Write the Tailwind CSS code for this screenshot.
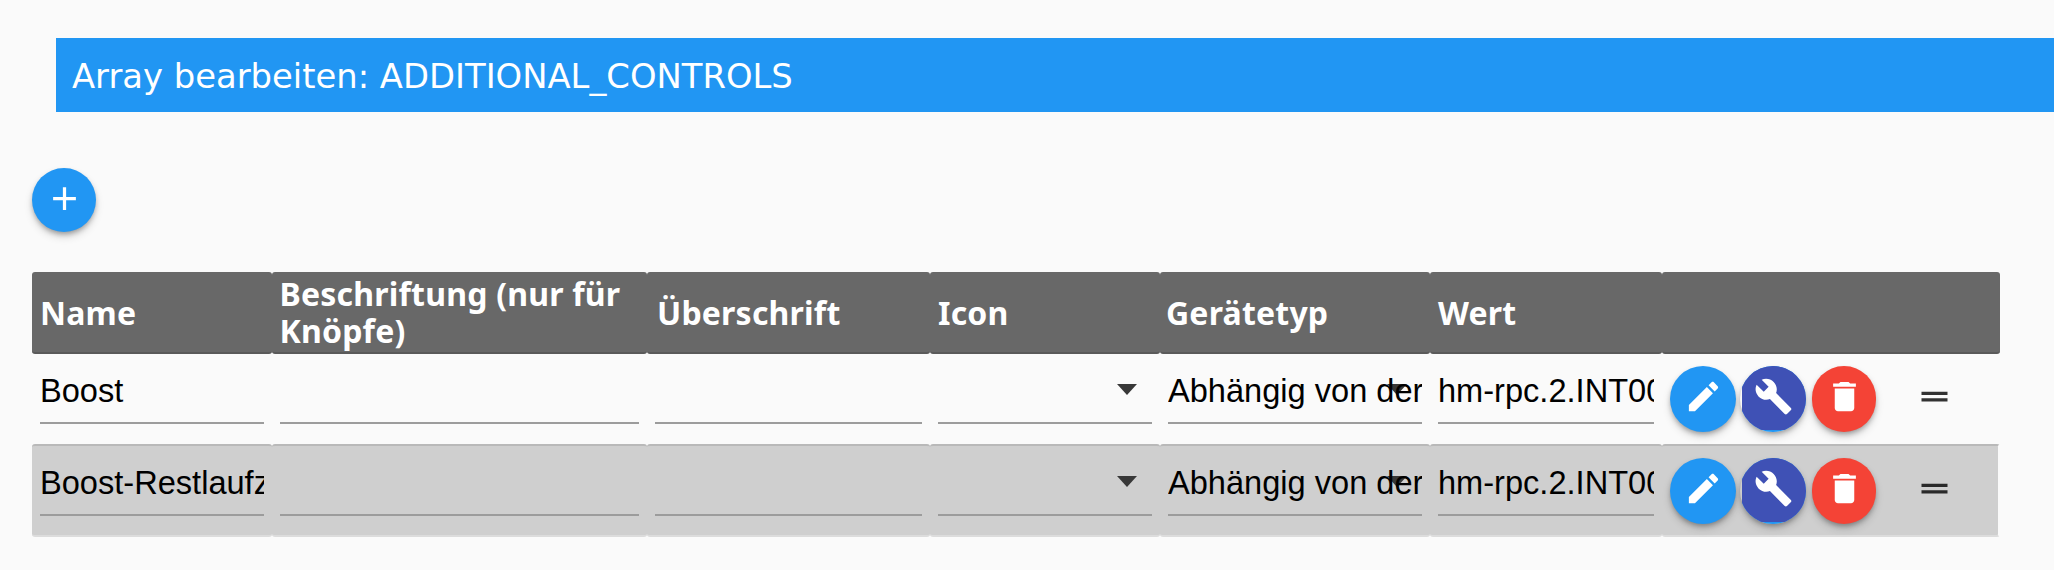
<!DOCTYPE html>
<html lang="de">
<head>
  <meta charset="UTF-8" />
  <title>Array bearbeiten</title>
  <script src="https://cdn.jsdelivr.net/npm/@tailwindcss/browser@4"></script>
</head>
<body class="bg-[#fafafa] w-[2054px] h-[570px] overflow-hidden font-['Liberation_Sans',sans-serif] text-black">

  <!-- Title bar -->
  <div class="mt-[38px] ml-[56px] h-[74px] bg-[#2196f3] text-white pl-[16px] pt-[4px] flex items-center font-['DejaVu_Sans',sans-serif] text-[33.8px]">
    Array bearbeiten: ADDITIONAL_CONTROLS
  </div>

  <!-- Add button -->
  <div class="mt-[56px] ml-[32px] w-[64px] h-[64px] rounded-full bg-[#2196f3] flex items-center justify-center shadow-[0_3px_5px_-1px_rgba(0,0,0,.3),0_5px_8px_0_rgba(0,0,0,.14)]">
    <svg class="w-[39px] h-[39px] -mt-[3px] fill-white" viewBox="0 0 24 24"><path d="M19 13h-6v6h-2v-6H5v-2h6V5h2v6h6v2z"/></svg>
  </div>

  <!-- Table -->
  <table class="mt-[40px] ml-[32px] w-[1968px] table-fixed border-separate border-spacing-0">
    <colgroup>
      <col class="w-[239.5px]" /><col class="w-[375.5px]" /><col class="w-[283px]" /><col class="w-[230px]" /><col class="w-[270px]" /><col class="w-[231.5px]" /><col class="w-[338.5px]" />
    </colgroup>
    <thead>
      <tr class="h-[82px] text-white text-left font-['Noto_Sans',sans-serif] text-[32px] tracking-[0.2px] font-bold leading-[37px]">
        <th class="bg-[#686868] border-b-2 border-[#5a5a5a] rounded-[3px] px-[8px]">Name</th>
        <th class="bg-[#686868] border-b-2 border-[#5a5a5a] rounded-[3px] pl-[8px] pr-0">Beschriftung (nur für Knöpfe)</th>
        <th class="bg-[#686868] border-b-2 border-[#5a5a5a] rounded-[3px] px-[10px]">Überschrift</th>
        <th class="bg-[#686868] border-b-2 border-[#5a5a5a] rounded-[3px] px-[8px]">Icon</th>
        <th class="bg-[#686868] border-b-2 border-[#5a5a5a] rounded-[3px] px-[6px]">Gerätetyp</th>
        <th class="bg-[#686868] border-b-2 border-[#5a5a5a] rounded-[3px] px-[8px]">Wert</th>
        <th class="bg-[#686868] border-b-2 border-[#5a5a5a] rounded-[3px] px-[8px]"></th>
      </tr>
    </thead>
    <tbody>
      <tr class="h-[90px] align-top text-[32.6px] leading-[49px]">
        <td class="pt-[12px] px-[8px]"><div class="h-[58px] border-b-2 border-[#9c9c9c] overflow-hidden whitespace-nowrap">Boost</div></td>
        <td class="pt-[12px] px-[8px]"><div class="h-[58px] border-b-2 border-[#9c9c9c]"></div></td>
        <td class="pt-[12px] px-[8px]"><div class="h-[58px] border-b-2 border-[#9c9c9c]"></div></td>
        <td class="pt-[12px] px-[8px]">
          <div class="relative h-[58px] border-b-2 border-[#9c9c9c]">
            <svg class="absolute right-[15px] top-[18px] w-[20px] h-[11px] fill-[#383838]" viewBox="0 0 20 11"><path d="M0 0h20L10 11z"/></svg>
          </div>
        </td>
        <td class="pt-[12px] px-[8px]">
          <div class="relative h-[58px] border-b-2 border-[#9c9c9c]">
            <svg class="absolute right-[15px] top-[18px] w-[20px] h-[11px] fill-[#383838]" viewBox="0 0 20 11"><path d="M0 0h20L10 11z"/></svg>
            <div class="relative overflow-hidden whitespace-nowrap">Abhängig von der Geräteart</div>
          </div>
        </td>
        <td class="pt-[12px] px-[8px]"><div class="h-[58px] border-b-2 border-[#9c9c9c] overflow-hidden whitespace-nowrap">hm-rpc.2.INT0001234</div></td>
        <td class="pt-[12px] pl-[8.5px]">
          <div class="flex">
            <div class="w-[66px] h-[66px] rounded-full bg-[#2196f3] flex items-center justify-center shadow-[0_3px_5px_-1px_rgba(0,0,0,.3),0_5px_8px_0_rgba(0,0,0,.14)]">
              <svg class="w-[39px] h-[39px] -mt-[5px] fill-white" viewBox="0 0 24 24"><path d="M3 17.25V21h3.75L17.81 9.94l-3.75-3.75L3 17.25zM20.71 7.04c.39-.39.39-1.02 0-1.41l-2.34-2.34c-.39-.39-1.02-.39-1.41 0l-1.83 1.83 3.75 3.75 1.83-1.83z"/></svg>
            </div>
            <div class="relative ml-[6px] w-[64px] h-[66px]">
              <div class="absolute -left-[2px] top-0 w-[66px] h-[66px] rounded-full shadow-[0_3px_5px_-1px_rgba(0,0,0,.3),0_5px_8px_0_rgba(0,0,0,.14)]"></div>
              <div class="relative w-[64px] h-[66px] overflow-hidden">
                <div class="relative -ml-[2px] w-[66px] h-[66px] rounded-full overflow-hidden bg-[#2196f3]">
                  <div class="h-[64px] bg-[#3f51b5] flex items-center justify-center">
                    <svg class="w-[39px] h-[39px] -mt-[3px] fill-white" viewBox="0 0 24 24"><path d="M22.7 19l-9.1-9.1c.9-2.3.4-5-1.5-6.9-2-2-5-2.4-7.4-1.3L9 6 6 9 1.6 4.7C.4 7.1.9 10.1 2.9 12.1c1.9 1.9 4.6 2.4 6.9 1.5l9.1 9.1c.4.4 1 .4 1.4 0l2.3-2.3c.5-.4.5-1.1.1-1.4z"/></svg>
                  </div>
                </div>
              </div>
            </div>
            <div class="ml-[6px] w-[64px] h-[66px] rounded-full bg-[#f44336] flex items-center justify-center shadow-[0_3px_5px_-1px_rgba(0,0,0,.3),0_5px_8px_0_rgba(0,0,0,.14)]">
              <svg class="w-[39px] h-[39px] -mt-[5px] fill-white" viewBox="0 0 24 24"><path d="M6 19c0 1.1.9 2 2 2h8c1.1 0 2-.9 2-2V7H6v12zM19 4h-3.5l-1-1h-5l-1 1H5v2h14V4z"/></svg>
            </div>
            <svg class="ml-[38.5px] mt-[11px] w-[39px] h-[39px] fill-black/80" viewBox="0 0 24 24"><path d="M20 9H4v2h16V9zM4 15h16v-2H4v2z"/></svg>
          </div>
        </td>
      </tr>
      <tr class="h-[93px] align-top text-[32.6px] leading-[49px]">
        <td class="bg-[#cfcfcf] border-y-2 border-t-[#b9b9b9] border-b-[#dcdcdc] rounded-[3px] pt-[12px] px-[8px]"><div class="h-[58px] border-b-2 border-[#9c9c9c] overflow-hidden whitespace-nowrap">Boost-Restlaufzeit</div></td>
        <td class="bg-[#cfcfcf] border-y-2 border-t-[#b9b9b9] border-b-[#dcdcdc] rounded-[3px] pt-[12px] px-[8px]"><div class="h-[58px] border-b-2 border-[#9c9c9c]"></div></td>
        <td class="bg-[#cfcfcf] border-y-2 border-t-[#b9b9b9] border-b-[#dcdcdc] rounded-[3px] pt-[12px] px-[8px]"><div class="h-[58px] border-b-2 border-[#9c9c9c]"></div></td>
        <td class="bg-[#cfcfcf] border-y-2 border-t-[#b9b9b9] border-b-[#dcdcdc] rounded-[3px] pt-[12px] px-[8px]">
          <div class="relative h-[58px] border-b-2 border-[#9c9c9c]">
            <svg class="absolute right-[15px] top-[18px] w-[20px] h-[11px] fill-[#383838]" viewBox="0 0 20 11"><path d="M0 0h20L10 11z"/></svg>
          </div>
        </td>
        <td class="bg-[#cfcfcf] border-y-2 border-t-[#b9b9b9] border-b-[#dcdcdc] rounded-[3px] pt-[12px] px-[8px]">
          <div class="relative h-[58px] border-b-2 border-[#9c9c9c]">
            <svg class="absolute right-[15px] top-[18px] w-[20px] h-[11px] fill-[#383838]" viewBox="0 0 20 11"><path d="M0 0h20L10 11z"/></svg>
            <div class="relative overflow-hidden whitespace-nowrap">Abhängig von der Geräteart</div>
          </div>
        </td>
        <td class="bg-[#cfcfcf] border-y-2 border-t-[#b9b9b9] border-b-[#dcdcdc] rounded-[3px] pt-[12px] px-[8px]"><div class="h-[58px] border-b-2 border-[#9c9c9c] overflow-hidden whitespace-nowrap">hm-rpc.2.INT0001234</div></td>
        <td class="bg-[#cfcfcf] border-y-2 border-t-[#b9b9b9] border-b-[#dcdcdc] border-r-2 border-r-[#fafafa] rounded-[3px] pt-[12px] pl-[8.5px]">
          <div class="flex">
            <div class="w-[66px] h-[66px] rounded-full bg-[#2196f3] flex items-center justify-center shadow-[0_3px_5px_-1px_rgba(0,0,0,.3),0_5px_8px_0_rgba(0,0,0,.14)]">
              <svg class="w-[39px] h-[39px] -mt-[5px] fill-white" viewBox="0 0 24 24"><path d="M3 17.25V21h3.75L17.81 9.94l-3.75-3.75L3 17.25zM20.71 7.04c.39-.39.39-1.02 0-1.41l-2.34-2.34c-.39-.39-1.02-.39-1.41 0l-1.83 1.83 3.75 3.75 1.83-1.83z"/></svg>
            </div>
            <div class="relative ml-[6px] w-[64px] h-[66px]">
              <div class="absolute -left-[2px] top-0 w-[66px] h-[66px] rounded-full shadow-[0_3px_5px_-1px_rgba(0,0,0,.3),0_5px_8px_0_rgba(0,0,0,.14)]"></div>
              <div class="relative w-[64px] h-[66px] overflow-hidden">
                <div class="relative -ml-[2px] w-[66px] h-[66px] rounded-full overflow-hidden bg-[#2196f3]">
                  <div class="h-[64px] bg-[#3f51b5] flex items-center justify-center">
                    <svg class="w-[39px] h-[39px] -mt-[3px] fill-white" viewBox="0 0 24 24"><path d="M22.7 19l-9.1-9.1c.9-2.3.4-5-1.5-6.9-2-2-5-2.4-7.4-1.3L9 6 6 9 1.6 4.7C.4 7.1.9 10.1 2.9 12.1c1.9 1.9 4.6 2.4 6.9 1.5l9.1 9.1c.4.4 1 .4 1.4 0l2.3-2.3c.5-.4.5-1.1.1-1.4z"/></svg>
                  </div>
                </div>
              </div>
            </div>
            <div class="ml-[6px] w-[64px] h-[66px] rounded-full bg-[#f44336] flex items-center justify-center shadow-[0_3px_5px_-1px_rgba(0,0,0,.3),0_5px_8px_0_rgba(0,0,0,.14)]">
              <svg class="w-[39px] h-[39px] -mt-[5px] fill-white" viewBox="0 0 24 24"><path d="M6 19c0 1.1.9 2 2 2h8c1.1 0 2-.9 2-2V7H6v12zM19 4h-3.5l-1-1h-5l-1 1H5v2h14V4z"/></svg>
            </div>
            <svg class="ml-[38.5px] mt-[11px] w-[39px] h-[39px] fill-black/80" viewBox="0 0 24 24"><path d="M20 9H4v2h16V9zM4 15h16v-2H4v2z"/></svg>
          </div>
        </td>
      </tr>
    </tbody>
  </table>

</body>
</html>
